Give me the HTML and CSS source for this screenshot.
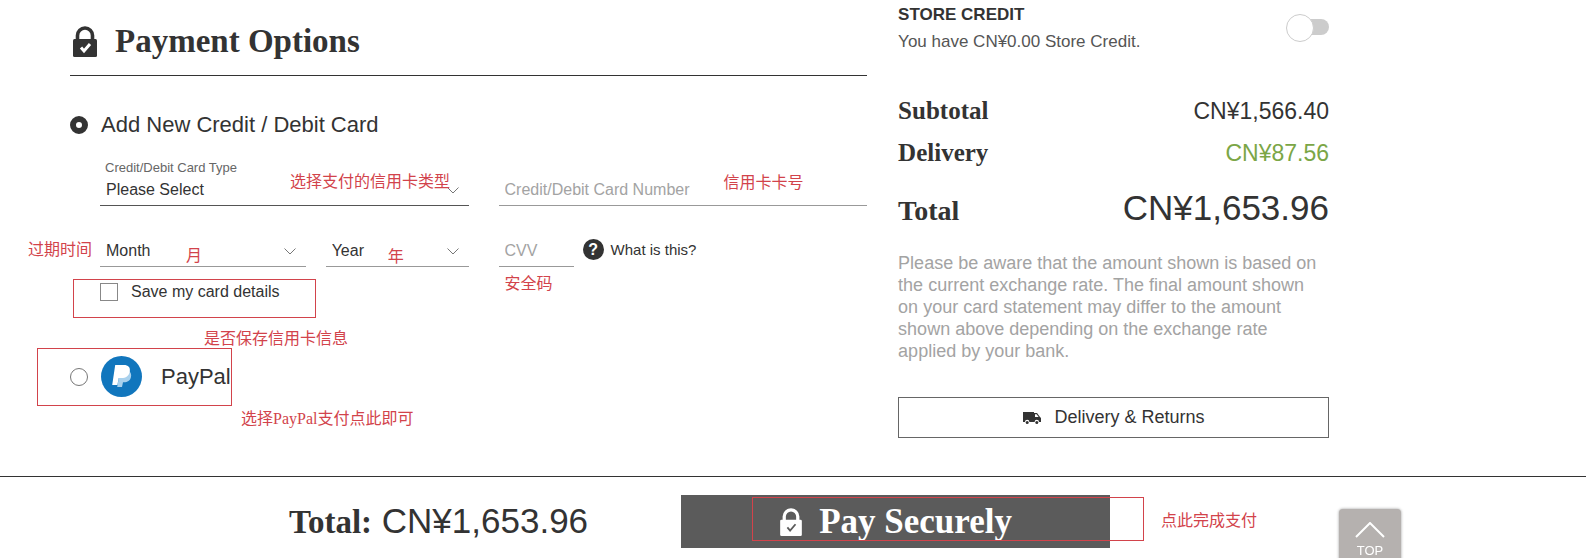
FILE: index.html
```html
<!DOCTYPE html>
<html lang="en">
<head>
  <meta charset="UTF-8">
  <meta name="viewport" content="width=device-width, initial-scale=1.0">
  <title>Payment Options</title>
  <link rel="stylesheet" href="styles.css">
</head>

<body>
  <main class="checkout">
    <form class="payment" id="payment-form">
      <header class="payment-header">
        <svg class="lock-icon" viewBox="0 0 24 31" aria-hidden="true">
          <path d="M4.500 14V9.500a7.500 7.500 0 0 1 15 0V14" fill="none" stroke="currentColor" stroke-width="3.600"/>
          <rect y="13" width="24" height="18" rx="1.500" fill="currentColor"/>
          <path class="lock-tick" d="M8 21.500l3 3.500 6-7" fill="none" stroke-width="3"/>
        </svg>
        <h1>Payment Options</h1>
      </header>

      <div class="option">
        <input type="radio" name="method" id="method-card" class="radio" checked>
        <label for="method-card">Add New Credit / Debit Card</label>
      </div>

      <div class="card-fields">
        <div class="field">
          <label class="field-label" for="card-type">Credit/Debit Card Type</label>
          <select id="card-type" class="control control-active">
            <option>Please Select</option>
          </select>
          <svg class="chevron" viewBox="0 0 12 7" aria-hidden="true"><path d="M0.500 0.500L6 6l5.500-5.500"/></svg>
          <span class="note note-type" lang="zh">选择支付的信用卡类型</span>
        </div>

        <div class="field">
          <input type="text" class="control" aria-label="Credit/Debit Card Number" placeholder="Credit/Debit Card Number">
          <span class="note note-number" lang="zh">信用卡卡号</span>
        </div>

        <div class="expiry">
          <div class="field">
            <select class="control" aria-label="Month">
              <option>Month</option>
            </select>
            <svg class="chevron" viewBox="0 0 12 7" aria-hidden="true"><path d="M0.500 0.500L6 6l5.500-5.500"/></svg>
            <span class="note note-expiry" lang="zh">过期时间</span>
            <span class="note note-month" lang="zh">月</span>
          </div>
          <div class="field">
            <select class="control" aria-label="Year">
              <option>Year</option>
            </select>
            <svg class="chevron" viewBox="0 0 12 7" aria-hidden="true"><path d="M0.500 0.500L6 6l5.500-5.500"/></svg>
            <span class="note note-year" lang="zh">年</span>
          </div>
        </div>

        <div class="security">
          <div class="field field-cvv">
            <input type="text" class="control" aria-label="CVV" placeholder="CVV">
            <span class="note note-cvv" lang="zh">安全码</span>
          </div>
          <a href="#cvv-help" class="help"><span class="help-icon" aria-hidden="true">?</span>What is this?</a>
        </div>
      </div>

      <div class="save-card">
        <input type="checkbox" id="save-card" class="checkbox">
        <label for="save-card">Save my card details</label>
        <span class="frame frame-save"></span>
        <span class="note note-save" lang="zh">是否保存信用卡信息</span>
      </div>

      <div class="option option-paypal">
        <input type="radio" name="method" id="method-paypal" class="radio">
        <label for="method-paypal">
          <svg class="paypal-icon" viewBox="0 0 41 41" aria-hidden="true">
            <circle cx="20.500" cy="20.500" r="20.500" fill="#1176bd"/>
            <path d="M19 15h9c2 1.500 2.500 3.500 2 6-.8 3.800-3.500 5.300-7 5.300h-1l-1 4.700h-4.800z" fill="#a9d1ed"/>
            <path d="M14.200 9h8.600c4.500 0 6.700 2.400 6 6.400-.8 4.500-4 6.600-8.300 6.600h-2.800l-1.300 7h-5.200z" fill="#fff"/>
          </svg>
          PayPal
        </label>
        <span class="frame frame-paypal"></span>
        <span class="note note-paypal" lang="zh">选择PayPal支付点此即可</span>
      </div>
    </form>

    <aside class="summary">
      <div class="credit">
        <div>
          <h2>STORE CREDIT</h2>
          <p>You have CN¥0.00 Store Credit.</p>
        </div>
        <input type="checkbox" class="switch" aria-label="Use store credit">
      </div>

      <dl class="totals">
        <div class="total-row">
          <dt>Subtotal</dt>
          <dd>CN¥1,566.40</dd>
        </div>
        <div class="total-row total-delivery">
          <dt>Delivery</dt>
          <dd>CN¥87.56</dd>
        </div>
        <div class="total-row total-final">
          <dt>Total</dt>
          <dd>CN¥1,653.96</dd>
        </div>
      </dl>

      <p class="rate-notice">Please be aware that the amount shown is based on the current exchange rate. The final amount shown on your card statement may differ to the amount shown above depending on the exchange rate applied by your bank.</p>

      <button type="button" class="returns-button">
        <svg class="truck-icon" viewBox="0 0 18 12" aria-hidden="true">
          <path d="M0 0h11v1h3l3 4 1 1v4h-2a2.200 2.200 0 0 0-4.400 0H6.400a2.200 2.200 0 0 0-4.400 0H0z" fill="currentColor"/>
          <path d="M12 2.200h1.600l2 2.800H12z" fill="#fff"/>
          <circle cx="4.200" cy="10.400" r="1.500" fill="currentColor"/>
          <circle cx="13.800" cy="10.400" r="1.500" fill="currentColor"/>
        </svg>
        Delivery &amp; Returns
      </button>
    </aside>
  </main>

  <footer class="pay-bar">
    <p class="pay-total"><strong>Total:</strong> CN¥1,653.96</p>
    <div class="pay-action">
      <button type="submit" form="payment-form" class="pay-button">
        <svg class="lock-icon" viewBox="0 0 24 31" aria-hidden="true">
          <path d="M4.500 14V9.500a7.500 7.500 0 0 1 15 0V14" fill="none" stroke="currentColor" stroke-width="3.600"/>
          <rect y="13" width="24" height="18" rx="1.500" fill="currentColor"/>
          <path class="lock-tick" d="M8 21.500l3 3.500 6-7" fill="none" stroke-width="2"/>
        </svg>
        Pay Securely
      </button>
      <span class="frame frame-pay"></span>
      <span class="note note-pay" lang="zh">点此完成支付</span>
    </div>
  </footer>

  <a href="#" class="back-to-top">
    <svg viewBox="0 0 30 16" aria-hidden="true"><path d="M1 15L15 1l14 14"/></svg>
    TOP
  </a>
</body>
</html>
```
FILE: styles.css
```css
:root {
  --text: #333;
  --muted: #a3a3a3;
  --line: #999;
  --green: #7ba646;
  --red: #d2434b;
  --sans: "Liberation Sans", Arial, sans-serif;
  --serif: "Liberation Serif", "Times New Roman", serif;
}

* {
  box-sizing: border-box;
}

body,
h1,
h2,
p,
dl,
dd {
  margin: 0;
}

body {
  background: #fff;
  color: var(--text);
  font-family: var(--sans);
  font-size: 16px;
}

button,
input,
select {
  margin: 0;
  font-family: inherit;
  color: inherit;
}

.checkout {
  display: grid;
  grid-template-columns: 37fr 20fr;
  column-gap: 31px;
  padding: 0 257px 38px 70px;
}

/* Payment header */
.payment-header {
  display: flex;
  align-items: center;
  gap: 18px;
  padding: 26px 0 18px 3px;
  border-bottom: 1px solid var(--text);
}

.payment-header h1 {
  font: bold 33px/31px var(--serif);
}

.lock-icon {
  width: 24px;
  height: 31px;
}

.lock-tick {
  stroke: #fff;
}

/* Payment methods */
.option {
  position: relative;
  display: flex;
  align-items: center;
  gap: 13px;
  margin-top: 36px;
  font-size: 22px;
  line-height: 26px;
}

.option label {
  display: flex;
  align-items: center;
  gap: 19px;
}

.option-paypal {
  margin-top: 55px;
}

.radio {
  appearance: none;
  width: 18px;
  height: 18px;
  border: 1px solid #777;
  border-radius: 50%;
}

.radio:checked {
  border: 6px solid var(--text);
}

.paypal-icon {
  width: 41px;
  height: 41px;
}

/* Card form */
.card-fields {
  display: grid;
  grid-template-columns: 1fr 1fr;
  gap: 31px 30px;
  align-items: end;
  margin: 22px 0 0 30px;
}

.field {
  position: relative;
}

.field-label {
  display: block;
  padding-left: 5px;
  color: #666;
  font-size: 13px;
  line-height: 16px;
}

.control {
  appearance: none;
  display: block;
  width: 100%;
  height: 30px;
  padding: 0 6px 2px;
  border: 0;
  border-bottom: 1px solid var(--line);
  border-radius: 0;
  background: transparent;
  font-size: 16px;
}

.control-active {
  border-color: #555;
}

.control::placeholder {
  color: var(--muted);
  opacity: 1;
}

.chevron {
  position: absolute;
  right: 10px;
  bottom: 12px;
  width: 12px;
  height: 7px;
  fill: none;
  stroke: #777;
}

.expiry {
  display: grid;
  grid-template-columns: 59fr 41fr;
  gap: 20px;
}

.security {
  display: flex;
  gap: 9px;
}

.field-cvv {
  width: 75px;
}

.help {
  display: flex;
  align-items: center;
  gap: 7px;
  height: 24px;
  color: inherit;
  font-size: 15px;
  text-decoration: none;
}

.help-icon {
  width: 21px;
  border-radius: 50%;
  background: var(--text);
  color: #fff;
  font-size: 16px;
  font-weight: bold;
  line-height: 21px;
  text-align: center;
}

.save-card {
  position: relative;
  display: flex;
  gap: 13px;
  margin: 16px 0 0 30px;
  line-height: 18px;
}

.checkbox {
  appearance: none;
  width: 18px;
  height: 18px;
  border: 1px solid #888;
}

/* Order summary */
.summary {
  padding-top: 5px;
}

.credit {
  display: flex;
  align-items: flex-start;
  justify-content: space-between;
  font-size: 17px;
  line-height: 20px;
}

.credit h2 {
  margin-bottom: 7px;
  font-size: 17px;
}

.credit p {
  color: #555;
}

.switch {
  appearance: none;
  position: relative;
  width: 43px;
  height: 26px;
  margin-top: 9px;
}

.switch::before {
  content: "";
  position: absolute;
  inset: 5px 0 5px 10px;
  border-radius: 8px;
  background: #ccc;
}

.switch::after {
  content: "";
  position: absolute;
  top: 0;
  left: 0;
  width: 26px;
  height: 26px;
  border: 1px solid #ccc;
  border-radius: 50%;
  background: #fff;
}

.totals {
  display: grid;
  gap: 12px;
  margin-top: 44px;
}

.total-row {
  display: flex;
  align-items: baseline;
  justify-content: space-between;
  font-size: 23px;
  line-height: 30px;
}

.total-row dt {
  font-family: var(--serif);
  font-size: 25px;
  font-weight: bold;
}

.total-delivery dd {
  color: var(--green);
}

.total-final {
  margin-top: 8px;
  font-size: 35px;
  line-height: 40px;
}

.total-final dt {
  font-size: 28px;
}

.rate-notice {
  margin-top: 21px;
  padding-right: 8px;
  color: var(--muted);
  font-size: 18px;
  line-height: 22px;
}

.returns-button {
  display: flex;
  align-items: center;
  justify-content: center;
  gap: 14px;
  width: 100%;
  height: 41px;
  margin-top: 35px;
  border: 1px solid #666;
  background: #fff;
  font-size: 18px;
}

.truck-icon {
  width: 18px;
  height: 12px;
}

/* Pay bar */
.pay-bar {
  display: flex;
  align-items: center;
  justify-content: center;
  gap: 93px;
  padding: 18px 257px 10px 70px;
  border-top: 1px solid var(--text);
}

.pay-total {
  font-size: 35px;
  line-height: 40px;
}

.pay-total strong {
  font-family: var(--serif);
  font-size: 33px;
}

.pay-action {
  position: relative;
  width: 429px;
}

.pay-button {
  display: flex;
  align-items: center;
  justify-content: center;
  gap: 16px;
  width: 100%;
  height: 53px;
  border: 0;
  background: #5b5b5b;
  color: #fff;
  font: bold 35px/40px var(--serif);
}

.pay-button .lock-icon {
  height: 28px;
}

.pay-button .lock-tick {
  stroke: #5b5b5b;
}

.back-to-top {
  position: fixed;
  right: 185px;
  bottom: -13px;
  display: flex;
  flex-direction: column;
  align-items: center;
  gap: 5px;
  width: 62px;
  height: 62px;
  padding-top: 13px;
  border-radius: 4px;
  background: #b5b1af;
  box-shadow: 0 0 3px #999;
  color: #fff;
  font-size: 13px;
  line-height: 16px;
  text-decoration: none;
}

.back-to-top svg {
  width: 30px;
  height: 16px;
  fill: none;
  stroke: #fff;
  stroke-width: 2;
}

/* Red guide notes laid over the form */
.note {
  position: absolute;
  color: var(--red);
  font: 16px/16px "Liberation Serif", "Noto Sans CJK SC", serif;
  white-space: nowrap;
  pointer-events: none;
}

.frame {
  position: absolute;
  border: 1px solid var(--red);
  pointer-events: none;
}

.note-type {
  top: 14px;
  left: 190px;
}

.note-number {
  top: -1px;
  left: 225px;
}

.note-expiry {
  top: 5px;
  left: -72px;
}

.note-month {
  top: 11px;
  left: 86px;
}

.note-year {
  top: 12px;
  left: 62px;
}

.note-cvv {
  top: 39px;
  left: 6px;
}

.note-save {
  top: 48px;
  left: 104px;
}

.note-paypal {
  top: 55px;
  left: 171px;
}

.note-pay {
  top: 18px;
  left: 480px;
}

.frame-save {
  top: -4px;
  left: -27px;
  width: 243px;
  height: 39px;
}

.frame-paypal {
  top: -8px;
  left: -33px;
  width: 195px;
  height: 58px;
}

.frame-pay {
  top: 2px;
  left: 71px;
  width: 392px;
  height: 44px;
}
```
